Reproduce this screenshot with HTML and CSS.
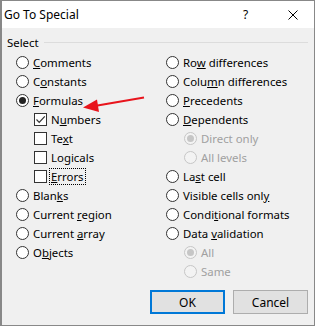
FILE: index.html
```html
<!DOCTYPE html>
<html>
    <head>
        <title>Go To Special</title>
        <link rel="stylesheet" href="styles.css">
    </head>
    <body>
        <div class="window">
            <div class="titlebar">
                <span class="title">Go To Special</span>
                <span class="help">?</span>
                <svg class="close" width="10" height="10" viewBox="0 0 10 10">
                    <path d="M0.5 0.5 L9.5 9.5 M9.5 0.5 L0.5 9.5" stroke="#000" stroke-width="1" fill="none"/>
                </svg>
            </div>

            <div class="content">
                <div class="group-label">
                    <span>Select</span>
                    <div class="group-line"></div>
                </div>

                <div class="options">
                    <div class="column">
                        <div class="row"><span class="radio"></span><span><u>C</u>omments</span></div>
                        <div class="row"><span class="radio"></span><span>C<u>o</u>nstants</span></div>
                        <div class="row"><span class="radio checked"></span><span><u>F</u>ormulas</span></div>
                        <div class="row sub"><span class="check checked">
                            <svg width="11" height="11" viewBox="0 0 11 11"><path d="M1.5 5.5 L4.2 8.3 L9.8 2.3" stroke="#333" stroke-width="1.2" fill="none"/></svg>
                        </span><span>N<u>u</u>mbers</span></div>
                        <div class="row sub"><span class="check"></span><span>Te<u>x</u>t</span></div>
                        <div class="row sub"><span class="check"></span><span>Lo<u>g</u>icals</span></div>
                        <div class="row sub"><span class="check"></span><span class="focus"><u>E</u>rrors</span></div>
                        <div class="row"><span class="radio"></span><span>Blan<u>k</u>s</span></div>
                        <div class="row"><span class="radio"></span><span>Current <u>r</u>egion</span></div>
                        <div class="row"><span class="radio"></span><span>Current <u>a</u>rray</span></div>
                        <div class="row"><span class="radio"></span><span>O<u>b</u>jects</span></div>
                    </div>
                    <div class="column">
                        <div class="row"><span class="radio"></span><span>Ro<u>w</u> differences</span></div>
                        <div class="row"><span class="radio"></span><span>Colu<u>m</u>n differences</span></div>
                        <div class="row"><span class="radio"></span><span><u>P</u>recedents</span></div>
                        <div class="row"><span class="radio"></span><span><u>D</u>ependents</span></div>
                        <div class="row sub disabled"><span class="radio checked"></span><span>Direct only</span></div>
                        <div class="row sub disabled"><span class="radio"></span><span>All levels</span></div>
                        <div class="row"><span class="radio"></span><span>La<u>s</u>t cell</span></div>
                        <div class="row"><span class="radio"></span><span>Visible cells onl<u>y</u></span></div>
                        <div class="row"><span class="radio"></span><span>Condi<u>t</u>ional formats</span></div>
                        <div class="row"><span class="radio"></span><span>Data <u>v</u>alidation</span></div>
                        <div class="row sub disabled"><span class="radio checked"></span><span>All</span></div>
                        <div class="row sub disabled"><span class="radio"></span><span>Same</span></div>
                    </div>
                </div>

                <div class="buttons">
                    <button class="btn default">OK</button>
                    <button class="btn">Cancel</button>
                </div>
            </div>

            <svg class="arrow" width="315" height="326" viewBox="0 0 315 326">
                <line x1="144" y1="97.5" x2="96" y2="105.8" stroke="#e8141c" stroke-width="2"/>
                <polygon points="83,107.5 97,99.5 99,112" fill="#e8141c"/>
            </svg>
        </div>
    </body>
</html>
```

FILE: styles.css
```css
body {
    margin: 0;
    padding: 0;
    background: #f0f0f0;
    font-family: "Noto Sans", "Open Sans", Arial, sans-serif;
    font-size: 11.4px;
    color: #000;
}

.window {
    position: relative;
    width: 315px;
    height: 326px;
    box-sizing: border-box;
    border: 1px solid #888;
    border-left-width: 2px;
    background: #f0f0f0;
    overflow: hidden;
}

.titlebar {
    display: flex;
    align-items: center;
    height: 27px;
    background: #fff;
    padding-left: 2px;
    box-sizing: border-box;
}

.title {
    flex: 1;
    line-height: 14px;
    font-size: 12px;
}

.help {
    width: 12px;
    margin-right: 33px;
    font-size: 12px;
}

.close {
    margin-right: 16px;
}

.content {
    padding: 5px 0 0 0;
}

.group-label {
    display: flex;
    align-items: center;
    height: 18px;
    padding-left: 5px;
    padding-right: 6px;
}

.group-line {
    flex: 1;
    height: 1px;
    background: #dcdcdc;
    margin-left: 5px;
}

.options {
    display: grid;
    grid-template-columns: 150px 1fr;
    padding-left: 14px;
    padding-top: 2px;
}

.row {
    display: flex;
    align-items: center;
    height: 19px;
    gap: 4px;
    white-space: nowrap;
}

.row.sub {
    padding-left: 18px;
}

.radio {
    width: 13px;
    height: 13px;
    box-sizing: border-box;
    border: 1px solid #333;
    border-radius: 50%;
    background: #fff;
    display: flex;
    align-items: center;
    justify-content: center;
    flex: none;
}

.radio.checked::after {
    content: "";
    width: 7px;
    height: 7px;
    border-radius: 50%;
    background: #222;
}

.disabled {
    color: #a0a0a0;
}

.disabled .radio {
    border-color: #c6c6c6;
    background: #f3f3f3;
}

.disabled .radio.checked::after {
    background: #c6c6c6;
}

.check {
    width: 13px;
    height: 13px;
    box-sizing: border-box;
    border: 1px solid #333;
    background: #fff;
    display: flex;
    align-items: center;
    justify-content: center;
    flex: none;
}

.check svg {
    display: block;
}

.focus {
    outline: 1px dotted #000;
    outline-offset: 0;
    padding: 0 1px;
    margin-left: -1px;
}

.buttons {
    display: flex;
    justify-content: flex-end;
    gap: 8px;
    padding-right: 6px;
    margin-top: 9px;
}

.btn {
    width: 75px;
    height: 24px;
    box-sizing: border-box;
    border: 1px solid #adadad;
    background: #e1e1e1;
    font-family: inherit;
    font-size: 12px;
    color: #000;
    padding: 0;
}

.btn.default {
    border: 2px solid #0078d7;
}

.arrow {
    position: absolute;
    left: -2px;
    top: -1px;
    pointer-events: none;
}
```
